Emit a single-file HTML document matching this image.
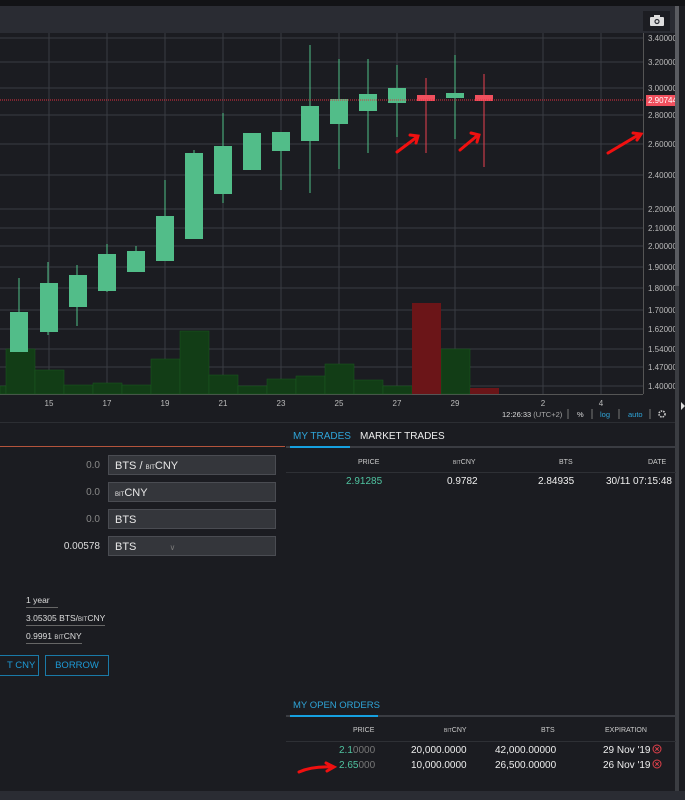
<!DOCTYPE html>
<html><head><meta charset="utf-8"><style>
body{margin:0;width:685px;height:800px;background:#1b1c21;overflow:hidden;font-family:"Liberation Sans",sans-serif;position:relative;color:#ddd}
.a{position:absolute}
.inp{position:absolute;left:108px;width:168px;height:20px;background:#34363b;border:1px solid #4a4c52;color:#e8e8e8;font-size:11px;line-height:20px;padding-left:6px;box-sizing:border-box}
.th{font-size:7px;color:#ccc}
.sm{font-size:6px}
</style></head><body>
<div class="a" style="left:0;top:0;width:685px;height:6px;background:#121316"></div>
<div class="a" style="left:0;top:6px;width:675px;height:27px;background:#2a2c33"></div>
<div class="a" style="left:643px;top:11px;width:27px;height:20px;background:#1c1d22"></div>
<svg class="a" style="left:650px;top:15px" width="14" height="11" viewBox="0 0 14 11"><rect x="0" y="2" width="14" height="9" rx="1" fill="#ddd"/><rect x="4" y="0" width="6" height="3" fill="#ddd"/><circle cx="7" cy="6.5" r="2.6" fill="#2a2c33"/><circle cx="7" cy="6.5" r="1.4" fill="#ddd"/></svg>
<div class="a" style="left:675px;top:6px;width:4px;height:790px;background:#3b3d42"></div>
<div class="a" style="left:675px;top:6px;width:4px;height:280px;background:#5a5c61"></div>
<svg class="a" style="left:0;top:33px" width="675" height="390" viewBox="0 33 675 390" font-family="Liberation Sans" font-size="8">
<rect x="0" y="33" width="675" height="390" fill="#1b1c21"/>
<g stroke="#3a3c42" stroke-width="1">
<line x1="0" x2="643" y1="38" y2="38"/><line x1="0" x2="643" y1="62" y2="62"/><line x1="0" x2="643" y1="88" y2="88"/><line x1="0" x2="643" y1="115" y2="115"/><line x1="0" x2="643" y1="144" y2="144"/><line x1="0" x2="643" y1="175" y2="175"/><line x1="0" x2="643" y1="209" y2="209"/><line x1="0" x2="643" y1="228" y2="228"/><line x1="0" x2="643" y1="246" y2="246"/><line x1="0" x2="643" y1="267" y2="267"/><line x1="0" x2="643" y1="288" y2="288"/><line x1="0" x2="643" y1="310" y2="310"/><line x1="0" x2="643" y1="329" y2="329"/><line x1="0" x2="643" y1="349" y2="349"/><line x1="0" x2="643" y1="367" y2="367"/><line x1="0" x2="643" y1="386" y2="386"/>
<line x1="49" x2="49" y1="33" y2="394"/><line x1="107" x2="107" y1="33" y2="394"/><line x1="165" x2="165" y1="33" y2="394"/><line x1="223" x2="223" y1="33" y2="394"/><line x1="281" x2="281" y1="33" y2="394"/><line x1="339" x2="339" y1="33" y2="394"/><line x1="397" x2="397" y1="33" y2="394"/><line x1="455" x2="455" y1="33" y2="394"/><line x1="543" x2="543" y1="33" y2="394"/><line x1="601" x2="601" y1="33" y2="394"/>
</g>
<line x1="643.5" x2="643.5" y1="33" y2="394" stroke="#555"/>
<line x1="0" x2="643" y1="394.5" y2="394.5" stroke="#555"/>
<g fill="#123d16" stroke="#1a5a20" stroke-width="0.5">
<rect x="0" y="386" width="6" height="8"/><rect x="6" y="349" width="29" height="45"/><rect x="35" y="370" width="29" height="24"/><rect x="64" y="385" width="29" height="9"/><rect x="93" y="383" width="29" height="11"/><rect x="122" y="385" width="29" height="9"/><rect x="151" y="359" width="29" height="35"/><rect x="180" y="331" width="29" height="63"/><rect x="209" y="375" width="29" height="19"/><rect x="238" y="386" width="29" height="8"/><rect x="267" y="379" width="29" height="15"/><rect x="296" y="376" width="29" height="18"/><rect x="325" y="364" width="29" height="30"/><rect x="354" y="380" width="29" height="14"/><rect x="383" y="386" width="29" height="8"/><rect x="441" y="349" width="29" height="45"/>
</g>
<rect x="412" y="303" width="29" height="91" fill="#6b1518"/><rect x="470" y="388" width="29" height="6" fill="#6b1518"/>
<g stroke="#4fbf88" stroke-width="1">
<line x1="19" x2="19" y1="278" y2="352"/><line x1="48" x2="48" y1="262" y2="335"/><line x1="77" x2="77" y1="265" y2="326"/><line x1="107" x2="107" y1="244" y2="292"/><line x1="136" x2="136" y1="246" y2="272"/><line x1="165" x2="165" y1="180" y2="261"/><line x1="194" x2="194" y1="150" y2="239"/><line x1="223" x2="223" y1="113" y2="203"/><line x1="252" x2="252" y1="150" y2="170"/><line x1="281" x2="281" y1="137" y2="190"/><line x1="310" x2="310" y1="45" y2="193"/><line x1="339" x2="339" y1="59" y2="169"/><line x1="368" x2="368" y1="59" y2="153"/><line x1="397" x2="397" y1="65" y2="137"/><line x1="455" x2="455" y1="55" y2="139"/>
</g>
<g fill="#52bd89">
<rect x="10" y="312" width="18" height="40"/><rect x="40" y="283" width="18" height="49"/><rect x="69" y="275" width="18" height="32"/><rect x="98" y="254" width="18" height="37"/><rect x="127" y="251" width="18" height="21"/><rect x="156" y="216" width="18" height="45"/><rect x="185" y="153" width="18" height="86"/><rect x="214" y="146" width="18" height="48"/><rect x="243" y="133" width="18" height="37"/><rect x="272" y="132" width="18" height="19"/><rect x="301" y="106" width="18" height="35"/><rect x="330" y="99" width="18" height="25"/><rect x="359" y="94" width="18" height="17"/><rect x="388" y="88" width="18" height="15"/><rect x="446" y="93" width="18" height="5"/>
</g>
<g stroke="#e84050"><line x1="426" x2="426" y1="78" y2="153"/><line x1="484" x2="484" y1="74" y2="167"/></g>
<g fill="#f0505e"><rect x="417" y="95" width="18" height="6"/><rect x="475" y="95" width="18" height="6"/></g>
<line x1="0" x2="643" y1="100" y2="100" stroke="#e03040" stroke-dasharray="1,1"/>
<rect x="644" y="33" width="31" height="361" fill="#1b1c21"/>
<rect x="646" y="95" width="29" height="11" fill="#f0505e"/>
<text x="648" y="103" fill="#fff" font-size="8">2.90744</text>
<g fill="#bbb" font-size="8">
<text x="648" y="41">3.40000</text><text x="648" y="65">3.20000</text><text x="648" y="91">3.00000</text><text x="648" y="118">2.80000</text><text x="648" y="147">2.60000</text><text x="648" y="178">2.40000</text><text x="648" y="212">2.20000</text><text x="648" y="231">2.10000</text><text x="648" y="249">2.00000</text><text x="648" y="270">1.90000</text><text x="648" y="291">1.80000</text><text x="648" y="313">1.70000</text><text x="648" y="332">1.62000</text><text x="648" y="352">1.54000</text><text x="648" y="370">1.47000</text><text x="648" y="389">1.40000</text>
</g>
<g fill="#bbb" font-size="8" text-anchor="middle">
<text x="49" y="406">15</text><text x="107" y="406">17</text><text x="165" y="406">19</text><text x="223" y="406">21</text><text x="281" y="406">23</text><text x="339" y="406">25</text><text x="397" y="406">27</text><text x="455" y="406">29</text><text x="543" y="406">2</text><text x="601" y="406">4</text>
</g>
<g font-size="7.5">
<text x="502" y="417" fill="#ddd">12:26:33 <tspan fill="#aaa">(UTC+2)</tspan></text>
<text x="577" y="417" fill="#ddd">%</text><text x="600" y="417" fill="#2fa4d8">log</text><text x="628" y="417" fill="#2fa4d8">auto</text>
</g>
<g stroke="#777"><line x1="568" x2="568" y1="409" y2="419"/><line x1="592" x2="592" y1="409" y2="419"/><line x1="619" x2="619" y1="409" y2="419"/><line x1="650" x2="650" y1="409" y2="419"/></g>
<circle cx="662" cy="414" r="3" fill="none" stroke="#ccc" stroke-width="1.6" stroke-dasharray="1.5,1"/>
<g stroke="#f01010" stroke-width="3" fill="none" stroke-linecap="round">
<path d="M397 152 L417 137 M410 135 L418 136 L416 143"/>
<path d="M460 150 L478 135 M471 133 L479 135 L477 142"/>
<path d="M608 153 Q625 143 640 134 M633 133 L641 134 L637 140"/>
</g>
</svg>
<svg class="a" style="left:290px;top:755px" width="50" height="25"><path d="M9 17 Q22 11 42 12 M36 8 L44 12 L37 16" stroke="#f01010" stroke-width="3" fill="none" stroke-linecap="round"/></svg>
<div class="a" style="left:0;top:422px;width:675px;height:1px;background:#2c2e33"></div>
<div class="a" style="left:0;top:446px;width:285px;height:1px;background:#b4543c"></div>
<div class="a" style="left:286px;top:446px;width:390px;height:2px;background:#3a3c42"></div>
<div class="a" style="left:290px;top:446px;width:60px;height:2px;background:#16a0e0"></div>
<div class="a" style="left:293px;top:431px;font-size:10px;color:#2fa4d8">MY TRADES</div>
<div class="a" style="left:360px;top:431px;font-size:10px;color:#eee">MARKET TRADES</div>
<div class="a" style="right:585px;top:460px;font-size:10px;color:#888">0.0</div>
<div class="inp" style="top:455px">BTS / <span class="sm">BIT</span>CNY</div>
<div class="a" style="right:585px;top:487px;font-size:10px;color:#888">0.0</div>
<div class="inp" style="top:482px"><span class="sm">BIT</span>CNY</div>
<div class="a" style="right:585px;top:514px;font-size:10px;color:#888">0.0</div>
<div class="inp" style="top:509px">BTS</div>
<div class="a" style="right:585px;top:541px;font-size:10px;color:#ddd">0.00578</div>
<div class="inp" style="top:536px">BTS <span style="margin-left:30px;color:#777;font-size:8px">∨</span></div>
<div class="a th" style="left:358px;top:459px">PRICE</div>
<div class="a th" style="left:453px;top:459px"><span style="font-size:5px">BIT</span>CNY</div>
<div class="a th" style="left:559px;top:459px">BTS</div>
<div class="a th" style="left:648px;top:459px">DATE</div>
<div class="a" style="left:286px;top:472px;width:390px;height:1px;background:#2e3035"></div>
<div class="a" style="left:346px;top:476px;font-size:10px;color:#4fc3a0">2.91285</div>
<div class="a" style="left:447px;top:476px;font-size:10px;color:#eee">0.9782</div>
<div class="a" style="left:538px;top:476px;font-size:10px;color:#eee">2.84935</div>
<div class="a" style="left:606px;top:476px;font-size:10px;color:#eee">30/11 07:15:48</div>
<div class="a" style="left:26px;top:595px;font-size:8.5px;color:#ddd;border-bottom:1px solid #666;padding-bottom:2px;width:32px">1 year</div>
<div class="a" style="left:26px;top:613px;font-size:8.5px;color:#ddd;border-bottom:1px solid #666;padding-bottom:2px">3.05305 BTS/<span style="font-size:6px">BIT</span>CNY</div>
<div class="a" style="left:26px;top:631px;font-size:8.5px;color:#ddd;border-bottom:1px solid #666;padding-bottom:2px">0.9991 <span style="font-size:6px">BIT</span>CNY</div>
<div class="a" style="left:-2px;top:655px;width:39px;height:19px;border:1px solid #1a7aa8;color:#1e9ad6;font-size:9.5px;line-height:19px;text-align:right">T CNY&nbsp;</div>
<div class="a" style="left:45px;top:655px;width:62px;height:19px;border:1px solid #1a7aa8;color:#1e9ad6;font-size:9.5px;line-height:19px;text-align:center">BORROW</div>
<div class="a" style="left:293px;top:700px;font-size:9.5px;color:#2fa4d8">MY OPEN ORDERS</div>
<div class="a" style="left:286px;top:715px;width:390px;height:2px;background:#3a3c42"></div>
<div class="a" style="left:290px;top:715px;width:88px;height:2px;background:#16a0e0"></div>
<div class="a th" style="left:353px;top:727px">PRICE</div>
<div class="a th" style="left:444px;top:727px"><span style="font-size:5px">BIT</span>CNY</div>
<div class="a th" style="left:541px;top:727px">BTS</div>
<div class="a th" style="left:605px;top:727px">EXPIRATION</div>
<div class="a" style="left:286px;top:741px;width:390px;height:1px;background:#2e3035"></div>
<div class="a" style="left:339px;top:745px;font-size:10px;color:#4fc3a0">2.1<span style="color:#777">0000</span></div>
<div class="a" style="left:411px;top:745px;font-size:10px;color:#eee">20,000.0000</div>
<div class="a" style="left:495px;top:745px;font-size:10px;color:#eee">42,000.00000</div>
<div class="a" style="left:603px;top:745px;font-size:10px;color:#eee">29 Nov '19</div>
<div class="a" style="left:339px;top:760px;font-size:10px;color:#4fc3a0">2.65<span style="color:#777">000</span></div>
<div class="a" style="left:411px;top:760px;font-size:10px;color:#eee">10,000.0000</div>
<div class="a" style="left:495px;top:760px;font-size:10px;color:#eee">26,500.00000</div>
<div class="a" style="left:603px;top:760px;font-size:10px;color:#eee">26 Nov '19</div>
<svg class="a" style="left:652px;top:744px" width="11" height="30"><g fill="none" stroke="#e0404a"><circle cx="5" cy="5" r="4"/><path d="M3.3 3.3l3.4 3.4M6.7 3.3l-3.4 3.4"/><circle cx="5" cy="20" r="4"/><path d="M3.3 18.3l3.4 3.4M6.7 18.3l-3.4 3.4"/></g></svg>
<div class="a" style="left:0;top:791px;width:685px;height:9px;background:#2a2c33"></div>
<div class="a" style="left:681px;top:402px;width:0;height:0;border-left:4px solid #ddd;border-top:4px solid transparent;border-bottom:4px solid transparent"></div>
</body></html>
